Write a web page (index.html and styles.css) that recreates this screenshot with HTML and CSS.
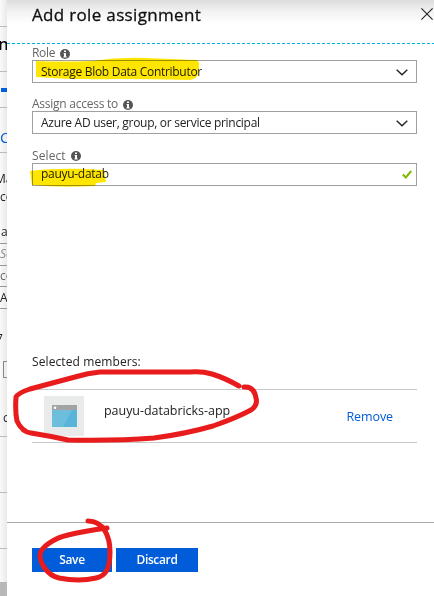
FILE: index.html
```html
<!DOCTYPE html>
<html lang="en">
<head>
<meta charset="utf-8">
<title>Add role assignment</title>
<link rel="stylesheet" href="styles.css">
</head>
<body>
<div class="app">
  <aside class="behind">
    <div class="cell h27"></div>
    <div class="cell h45 heading">n</div>
    <div class="cell h36 tab"><i></i></div>
    <div class="cell h45 link">C</div>
    <div class="copy">Ma<br>co</div>
    <div class="cell h22 indent">a</div>
    <div class="cell h22 hint">Se</div>
    <div class="cell h22 soft">co</div>
    <div class="cell h22">A</div>
    <div class="number">7</div>
    <div class="checkbox"></div>
    <div class="cell h59">c</div>
    <div class="cell h56"></div>
    <div class="cell h56"></div>
    <div class="scrollbar"></div>
  </aside>
  <main class="panel">
    <header class="header">
      <h1>Add role assignment</h1>
      <svg class="close" viewBox="0 0 12 12"><path d="M.4.4 11.6 11.6M11.6.4.4 11.6"/></svg>
    </header>
    <svg class="divider" viewBox="0 0 427 1"><path d="M0 .5H427"/></svg>
    <section class="form">
      <div class="field">
        <label><span class="t-role">Role</span><svg class="info" viewBox="0 0 10 10"><circle cx="5" cy="5" r="5"/><path d="M4 1.6h2v1.5H4zM3.6 4H6v3.4h.7v1H3.4v-1H4V5h-.4z"/></svg></label>
        <div class="input"><span>Storage Blob Data Contributor</span><svg class="chevron" viewBox="0 0 12 7"><path d="M.7.7 6 5.8 11.3.7"/></svg></div>
      </div>
      <div class="field">
        <label><span class="t-assign">Assign access to</span><svg class="info" viewBox="0 0 10 10"><circle cx="5" cy="5" r="5"/><path d="M4 1.6h2v1.5H4zM3.6 4H6v3.4h.7v1H3.4v-1H4V5h-.4z"/></svg></label>
        <div class="input"><span>Azure AD user, group, or service principal</span><svg class="chevron" viewBox="0 0 12 7"><path d="M.7.7 6 5.8 11.3.7"/></svg></div>
      </div>
      <div class="field">
        <label><span class="t-select">Select</span><svg class="info" viewBox="0 0 10 10"><circle cx="5" cy="5" r="5"/><path d="M4 1.6h2v1.5H4zM3.6 4H6v3.4h.7v1H3.4v-1H4V5h-.4z"/></svg></label>
        <div class="input"><span>pauyu-datab</span><svg class="check" viewBox="0 0 10 9"><path d="M.8 4.5 3.8 7.5 9.2 1"/></svg></div>
      </div>
    </section>
    <section class="members">
      <h2>Selected members:</h2>
      <div class="member">
        <div class="avatar"><svg viewBox="0 0 25 22"><path fill="#59b4d9" d="M0 5h25v17H0z"/><path fill="#a3a3a3" d="M0 0h25v5H0z"/><path fill="#fff" opacity=".12" d="M0 5h20L11 22H0z"/><circle cx="3" cy="2.8" r="1.3" fill="#fff"/></svg></div>
        <span class="name">pauyu-databricks-app</span>
        <a class="remove">Remove</a>
      </div>
    </section>
    <footer class="footer">
      <button class="save">Save</button>
      <button class="discard">Discard</button>
    </footer>
  </main>
  <svg class="highlighter" viewBox="0 0 434 596">
    <path d="M36 61Q62 62 92 61Q118 57 145 58L196 60Q200 61 199 66L199 72Q197 80 188 80Q150 79 116 79Q75 80 36 77Z"/>
    <path d="M30 171Q62 167 104 170L106 182L96 183L95 186Q62 188 32 185Z"/>
  </svg>
  <svg class="marker" viewBox="0 0 434 596">
    <path d="M239 386Q225 378 212 374Q202 371 190 372L100 372Q88 373 75 377L30 389Q18 393 16 397Q15 412 17 421Q22 432 31 433Q50 436 68 440Q115 441 154 438Q185 434 213 426Q236 418 251 410Q258 405 256 398Q254 386 244 387"/>
    <path d="M88 521C104 521 110 537 110 552C110 570 105 576 96 578Q79 582 59 578C46 575 40 562 40 555C40 547 55 538 68 535Q85 531 107 528"/>
  </svg>
</div>
</body>
</html>
```
FILE: styles.css
```css
* { box-sizing: border-box; }
body { margin: 0; font: 12px/18px "Open Sans", "Noto Sans", sans-serif; color: #222; }
.app { position: relative; display: flex; width: 434px; height: 596px; overflow: hidden; background: #fff; }
svg { display: block; fill: none; }
.behind { width: 7px; height: 596px; overflow: hidden; white-space: nowrap; background: linear-gradient(90deg, #fafafa, #e9e9e9); }
.cell { display: flex; align-items: center; border-bottom: 1px solid #bcbcbc; }
.h22 { height: 21.75px; border-color: #999; }
.h27 { height: 27px; }
.h36 { height: 36px; }
.h45 { height: 45px; }
.h56 { height: 56px; }
.h59 { height: 59px; padding: 21px 0 0 3px; }
.indent { padding-left: 1px; }
.heading { padding-bottom: 10px; font-size: 17px; font-weight: 600; color: #000; text-indent: -2px; }
.tab i { width: 6px; height: 4px; margin-left: 1px; background: #015cda; }
.link { padding-top: 14px; font-size: 15px; color: #015cda; }
.copy { height: 69px; padding-top: 17px; text-indent: -5px; }
.hint { font-style: italic; color: #888; }
.soft { color: #666; }
.number { height: 52px; padding-top: 21px; text-indent: -4px; }
.checkbox { width: 14px; height: 17px; margin-left: 3px; border: 1px solid #888; }
.scrollbar { height: 14px; margin-top: 33px; background: #b8b8b8; }
.panel { display: flex; flex-direction: column; width: 427px; height: 596px; background: linear-gradient(#dcdcdc, #f3f3f3 12px, #fff 24px); }
.header { display: flex; justify-content: space-between; height: 43px; padding: 2px 1px 0 25px; }
h1 { margin: 0; font-size: 17px; line-height: 26px; font-weight: 400; letter-spacing: .33px; -webkit-text-stroke: .3px #111; color: #111; white-space: nowrap; }
.close { width: 12px; height: 12px; margin-top: 6px; stroke: #222; stroke-width: 1.1; }
.divider { width: 427px; height: 1px; stroke: #00b2e3; stroke-width: 1; stroke-dasharray: 3 2; }
.form { height: 306px; padding: 0 17px 0 25px; }
.field { height: 51.4px; }
.field label { display: flex; gap: 5px; align-items: center; height: 16px; padding-top: 2px; color: #666; white-space: nowrap; }
.t-role { letter-spacing: -.3px; }
.t-assign { letter-spacing: -.25px; }
.t-select { letter-spacing: .1px; }
.info { width: 10px; height: 10px; margin-top: 1px; fill: #555; }
.info path { fill: #fff; }
.input { display: flex; align-items: center; justify-content: space-between; height: 23px; padding: 0 8px; border: 1px solid #a0a0a0; background: #fff; letter-spacing: -.29px; white-space: nowrap; }
.chevron { width: 12px; height: 7px; margin-top: 1px; stroke: #222; stroke-width: 1.4; }
.check { width: 10px; height: 9px; margin-right: -4px; stroke: #7fba00; stroke-width: 2; }
.members { height: 172px; padding: 0 17px 0 25px; }
h2 { height: 39px; margin: 0; padding-top: 3px; font-size: 12px; line-height: 18px; font-weight: 400; letter-spacing: .1px; }
.member { display: flex; height: 54px; border: solid #c8c8c8; border-width: 1px 0; }
.avatar { display: grid; place-items: center; width: 40px; height: 40px; margin: 6px 20px 0 12px; background: #e9eaea; }
.avatar svg { width: 25px; height: 22px; }
.name { padding-top: 12px; font-size: 12.5px; letter-spacing: -.04px; }
.remove { margin: 18px 24px 0 auto; font-size: 12.5px; letter-spacing: -.1px; color: #015cda; }
.footer { display: flex; gap: 4px; height: 74px; padding: 25px 0 0 25px; border-top: 1px solid #aaa; }
button { height: 24px; padding: 0; border: 0; background: #015cda; color: #fff; font: 600 12px/24px "Open Sans", sans-serif; letter-spacing: -.35px; }
.save { width: 80px; }
.discard { width: 82px; }
.highlighter, .marker { position: absolute; top: 0; left: 0; width: 434px; height: 596px; pointer-events: none; }
.highlighter { fill: #ffe600; mix-blend-mode: multiply; }
.marker { stroke: #e81c1c; stroke-width: 5; stroke-linecap: round; stroke-linejoin: round; }
```
